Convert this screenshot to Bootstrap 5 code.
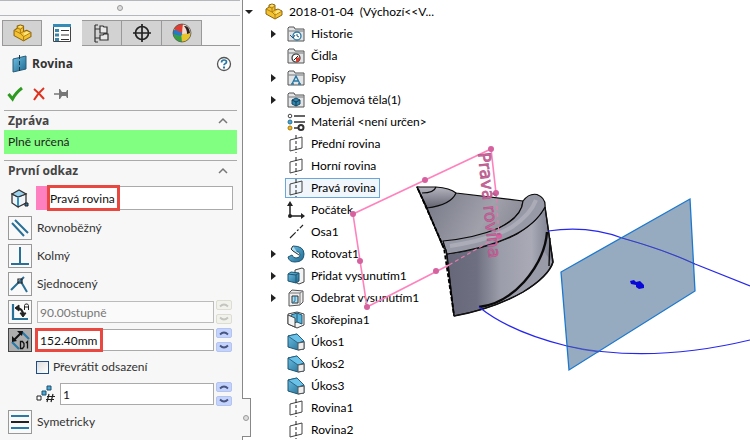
<!DOCTYPE html>
<html lang="cs">
<head>
<meta charset="utf-8">
<meta name="viewport" content="width=device-width, initial-scale=1">
<title>Rovina</title>
<link rel="stylesheet" href="https://cdn.jsdelivr.net/npm/bootstrap@5.3.0/dist/css/bootstrap.min.css">
<style>
body{font:12px/16px Lato,"Open Sans",sans-serif;color:#000;background:#fff;overflow:hidden}
.app{min-height:100vh}
.panel{width:243px;background:#f7f7f7;border-right:1px solid #888;color:#333}
.grip{height:16px;border:solid #b4b8bc;border-width:1px 0;margin-right:2px}
.knob{width:6px;height:6px;border:1px solid #999;border-radius:50%;background:#ddd}
.tabs{margin:4px 2px 0 0;padding-left:2px;height:26px}
.tabs button{width:40px;padding:0;background:#d2d2d2;border:1px solid #999;border-left-width:0;display:grid;place-items:center}
.tabs button:first-child{border-left-width:1px}
.tabs button.on{background:#f7f7f7;border-color:#f7f7f7}
.tabs .rest{border-bottom:1px solid #999}
.heading{height:36px;padding:0 8px 0 12px}
.heading h1,.block h2{font:700 12px/16px "Open Sans",sans-serif}
.heading h1{color:#333}
.plain{border:0;padding:0;background:none;display:grid;place-items:center}
.actions{height:28px;padding-left:7px;gap:6px}
.block{margin:0 5px 0 4px;border-top:1px solid #aaa}
.block h2{height:19px;color:#444}
.status{background:#80ff80;height:24px;padding-left:4px;color:#222;margin-bottom:6px}
.fields{padding:6px 4px 6px;gap:4px}
.line{height:24px;gap:5px}
.reference{height:26px;gap:4px;padding-bottom:2px}
.tool{width:24px;height:24px;border:1px solid #999;background:#f9f9f9;padding:0;display:grid;place-items:center;flex:none}
.tool.on{background:#adadad;border-color:#444}
.box{height:22px;width:0;border:1px solid #aaa;background:#fff;padding:0 2px;color:#111;min-width:0;border-radius:0;outline:0}
.box:disabled{background:#fafafa;border-color:#bbb;color:#777}
.swatch{width:11px;background:#ff80c0}
.mark-red{position:absolute;border:3px solid #e8483f;pointer-events:none}
.mark-ref{left:11px;top:-1px;width:73px;height:26px}
.mark-dist{left:-2px;top:-1px;width:68px;height:24px}
.spin{width:16px;flex:none;margin-left:-3px;margin-right:1px}
.spin button{height:10px;padding:0;border:1px solid #b4c4ef;border-radius:2px;background:#c4d3fb;display:grid;place-items:center}
.spin button:disabled{background:#f2f2ec;border-color:#ddddd2}
.tick{appearance:none;width:13px;height:13px;border:1px solid #1c4d85;background:linear-gradient(135deg,#ddd,#fff);margin:0}
.flip{height:22px;padding-left:28px}
.count{padding-left:28px}
.tab-out{position:absolute;left:100%;top:398px;width:9px;height:39px;background:#f7f7f7;border:1px solid #888;border-left:0}
.view{min-width:0;overflow:hidden}
.tree{padding:1px 0 0 2px;margin:0}
.tree ul{padding-left:22px}
.node{height:22px;white-space:nowrap}
.node svg{flex:none}
.arrow{width:16px;height:16px}
.name{padding:0 2px}
.pick{height:20px;margin-left:18px;padding:0 1px;border:1px solid #6aa6d8;background:#f0f6fb}
.scene{position:absolute;left:0;top:0;height:440px;width:507px;pointer-events:none}
.solid-text{font:400 17px "DejaVu Sans",sans-serif}
</style>
</head>
<body>
<svg width="0" height="0" class="position-absolute" aria-hidden="true">
<defs>
<linearGradient id="bl" x2="1" y2="1"><stop stop-color="#6fc0e4"/><stop offset="1" stop-color="#1f6a92"/></linearGradient>
<symbol id="part" viewBox="0 0 18 18"><path d="M1 9V6l3-2 0-2 3-1 3 1v5l3-1 4 2v4l-7 4-9-5z" fill="#f2c230" stroke="#8a6410" stroke-linejoin="round"/><path d="M4 4l3 1 3-2M7 5v4l3 3v4M10 7l-3 2-6-3M10 12l7-4" fill="none" stroke="#a87a18" stroke-width=".9"/><path d="M5 2.500l2-1 2 1-2 1zM10 9l3-2 3 1-5 3z" fill="#ffe680"/></symbol>
<symbol id="folder" viewBox="0 0 18 18"><path d="M1 16V3l1-1h5l1 2h9v12z" fill="#e2e4e6" stroke="#555"/><path d="M1.500 6h15" stroke="#777"/></symbol>
<symbol id="plane" viewBox="0 0 18 18"><path d="M3 5l12-3v11L3 16z" fill="none" stroke="#444"/><path d="M9 0v18" stroke="#222" stroke-dasharray="4 2 3 2"/></symbol>
<symbol id="draft" viewBox="0 0 18 18"><path d="M1 3l9-2 7 7v8l-6 1-10-3z" fill="url(#bl)" stroke="#1d5573"/><path d="M1 3l10 7 6-2-7-7z" fill="#6ac2e8" stroke="#1d5573" stroke-width=".8"/><path d="M11 10l6-1v7l-6 1z" fill="#eee" stroke="#555"/></symbol>
<symbol id="tri" viewBox="0 0 16 16"><path d="M4 4l5 4-5 4z" fill="#222"/></symbol>
<symbol id="chev" viewBox="0 0 12 8"><path d="M2 6l4-4 4 4" fill="none" stroke="#777" stroke-width="1.500"/></symbol>
<symbol id="up" viewBox="0 0 10 6"><path d="M1 4.500q4-4 8 0" fill="none" stroke="currentColor" stroke-width="1.800"/></symbol>
<symbol id="down" viewBox="0 0 10 6"><path d="M1 1.500q4 4 8 0" fill="none" stroke="currentColor" stroke-width="1.800"/></symbol>
</defs>
</svg>
<div class="app d-flex">
<aside class="panel position-relative flex-shrink-0">
  <div class="grip d-flex justify-content-center align-items-center"><span class="knob"></span></div>
  <nav class="tabs d-flex" aria-label="Karty">
    <button aria-label="Strom"><svg width="19" height="19"><use href="#part"/></svg></button>
    <button class="on" aria-label="Vlastnosti"><svg width="20" height="20" viewBox="0 0 20 20"><path d="M1.500 1.500h17v17h-17z" fill="#fff" stroke="#444"/><path d="M1 1h18v3H1z" fill="#348bb5"/><path d="M3 6h4v3H3zM3 10.500h4v3H3zM3 15h4v3H3z" fill="#3c86aa"/><path d="M9 7.500h8M9 12h8M9 16.500h8" stroke="#333"/></svg></button>
    <button aria-label="Konfigurace"><svg width="20" height="20" viewBox="0 0 20 20" fill="#e8e8e8" stroke="#333" stroke-width="1.200"><path d="M3 2v17M3 6h5M3 15h5M3 2h3M3 19h3" fill="none"/><path d="M8 3h3l1 1h3v6H8zM8 12h3l1-1h4v6H8z"/></svg></button>
    <button aria-label="Rozměry"><svg width="20" height="20" viewBox="0 0 20 20" fill="none" stroke="#222" stroke-width="1.700"><circle cx="10" cy="10" r="6.500"/><path d="M10 1v18M1 10h18"/></svg></button>
    <button aria-label="Vzhled"><svg width="20" height="20" viewBox="0 0 20 20"><circle cx="10" cy="10" r="9" fill="#e8c52b"/><path d="M1 10l8 0 1 9A9 9 0 0 1 1 10z" fill="#33a043"/><path d="M1 8l8-6 2 8-2 3-8-2z" fill="#2878c8"/><path d="M2 6a9 9 0 0 1 9-5l-1 9z" fill="#e03c31"/><path d="M11 1a9 9 0 0 1 8 9l-9 1z" fill="#f2d9d5"/><path d="M12 3q5-1 6 7l-3 1q0-5-3-8z" fill="#2a2020"/><circle cx="10" cy="10" r="9" fill="none" stroke="#555" stroke-width=".8"/></svg></button>
    <span class="rest flex-grow-1"></span>
  </nav>
  <header class="heading d-flex align-items-center">
    <svg width="16" height="18" viewBox="0 0 16 18"><path d="M1 4l13-3v13L1 17z" fill="url(#bl)" stroke="#285c78"/><path d="M7.500 0v18" stroke="#183848" stroke-dasharray="4 2"/></svg>
    <h1 class="mb-0 ms-1 flex-grow-1">Rovina</h1>
    <button class="plain" aria-label="Nápověda"><svg width="18" height="16" viewBox="1 0 16 16"><circle cx="8" cy="8" r="6.500" fill="#fff" stroke="#555" stroke-width="1.300"/><path d="M5.500 6.500q0-2.500 2.500-2.500t2.500 2q0 1-1.500 1.800-1 .5-1 1.500" fill="none" stroke="#2878a5" stroke-width="1.700"/><path d="M7 10.500h2v2H7z" fill="#2878a5"/></svg></button>
  </header>
  <div class="actions d-flex align-items-start pt-1">
    <button class="plain" aria-label="OK"><svg width="18" height="16" viewBox="0 0 18 16"><path d="M1.500 8l4 5q3-6 9.500-11" fill="none" stroke="#2d9a20" stroke-width="3"/></svg></button>
    <button class="plain" aria-label="Storno"><svg width="16" height="16" viewBox="0 0 16 16"><path d="M3 3q5 4 10 10M13 2Q7 7 3 14" fill="none" stroke="#e0301e" stroke-width="2"/></svg></button>
    <button class="plain" aria-label="Připnout"><svg width="16" height="16" viewBox="0 0 16 16"><path d="M1 8h6" stroke="#777" stroke-width="1.500"/><path d="M6 3h1l2 3h4l1-2h1v8h-1l-1-2H9l-2 3H6z" fill="#777"/></svg></button>
  </div>
  <section class="block">
    <h2 class="d-flex align-items-center justify-content-between mb-0 ps-1 pe-2">Zpráva <svg width="12" height="8"><use href="#chev"/></svg></h2>
    <div class="status d-flex align-items-center">Plně určená</div>
  </section>
  <section class="block">
    <h2 class="d-flex align-items-center justify-content-between mb-0 ps-1 pe-2">První odkaz <svg width="12" height="8"><use href="#chev"/></svg></h2>
    <div class="fields d-flex flex-column">
      <div class="reference d-flex align-items-center">
        <svg class="flex-shrink-0" width="24" height="24" viewBox="0 0 24 24"><path d="M4 8l6 3v10l-6-4zM10 11l8-3v9l-8 4" fill="#eef4f8" stroke="#333" stroke-width="1.300"/><path d="M4 8l7-4 7 4-8 3z" fill="#9bd3ee" stroke="#333" stroke-width="1.200"/><path d="M10 11v9" stroke="#3193c4" stroke-width="2"/><path d="M17 17h3v3h-3z" fill="#2878a5" stroke="#222"/></svg>
        <div class="position-relative d-flex flex-grow-1 h-100"><span class="swatch"></span><input class="box flex-grow-1 h-100" aria-label="Reference" value="Pravá rovina"><span class="mark-red mark-ref"></span></div>
      </div>
      <div class="line d-flex align-items-center"><button class="tool" id="t1"><svg width="20" height="20" viewBox="0 0 20 20" stroke="#2a6f96" stroke-width="2"><path d="M2 5l12 13M5 2l13 13"/></svg></button><label for="t1">Rovnoběžný</label></div>
      <div class="line d-flex align-items-center"><button class="tool" id="t2"><svg width="20" height="20" viewBox="0 0 20 20" stroke="#2a6f96" stroke-width="2"><path d="M10 1v17M1 18h18"/></svg></button><label for="t2">Kolmý</label></div>
      <div class="line d-flex align-items-center"><button class="tool" id="t3"><svg width="20" height="20" viewBox="0 0 20 20" stroke="#2a6f96" stroke-width="2" fill="none"><path d="M1 16L14 3M10 6l7 12"/><path d="M8 5h4v4H8z" stroke="#222" stroke-width="1.200"/></svg></button><label for="t3">Sjednocený</label></div>
      <div class="line d-flex align-items-center"><button class="tool" aria-label="Úhel"><svg width="20" height="20" viewBox="0 0 20 20" fill="none" stroke="#222"><path d="M3 2v15h15" stroke="#2a6f96" stroke-width="2.200"/><path d="M6 6q7 0 7 7" stroke-width="2"/><path d="M5 6l4-3v6zM13 15l-3-4h6z" fill="#222"/><path d="M14.500 8V3.500l1-1.500h2l1 1.500V8M14.500 5h4"/></svg></button><input class="box flex-grow-1" aria-label="Úhel" value="90.00stupně" disabled>
        <div class="spin d-grid gap-1"><button disabled aria-label="Více"><svg width="10" height="6" color="#c4c4c0"><use href="#up"/></svg></button><button disabled aria-label="Méně"><svg width="10" height="6" color="#c4c4c0"><use href="#down"/></svg></button></div></div>
      <div class="line d-flex align-items-center"><button class="tool on" aria-label="Vzdálenost"><svg width="22" height="22" viewBox="0 0 22 22" fill="none"><path d="M3 13l7 7M13 3l7 7" stroke="#2a7aa8" stroke-width="2.200"/><path d="M5 11l7-7" stroke="#111" stroke-width="2"/><path d="M3 13V7l5 5zM14 2H8l5 5z" fill="#111"/><path d="M11.500 12.500v7h2l1.500-2v-3l-1.500-2zM17 14l1.500-1.500v7" stroke="#111" stroke-width="1.300"/></svg></button><div class="position-relative d-flex flex-grow-1"><input class="box flex-grow-1" aria-label="Vzdálenost" value="152.40mm"><span class="mark-red mark-dist"></span></div>
        <div class="spin d-grid gap-1"><button aria-label="Více"><svg width="10" height="6" color="#475580"><use href="#up"/></svg></button><button aria-label="Méně"><svg width="10" height="6" color="#475580"><use href="#down"/></svg></button></div></div>
      <div class="flip d-flex align-items-center gap-1"><input class="tick" type="checkbox" id="flip"><label for="flip">Převrátit odsazení</label></div>
      <div class="line count d-flex align-items-center"><svg class="flex-shrink-0" width="19" height="18" viewBox="0 0 19 18"><path d="M1 11h4v4H1z" fill="#fff" stroke="#222"/><path d="M6 6h4v4H6zM11 1h4v4h-4z" fill="#4aa8d4" stroke="#1d4f6e"/><path d="M13 9l-2 8M17 9l-2 8M11 11.500h8M10 14.500h8" stroke="#222" stroke-width="1.200"/></svg><input class="box flex-grow-1" aria-label="Počet rovin" value="1">
        <div class="spin d-grid gap-1"><button aria-label="Více"><svg width="10" height="6" color="#475580"><use href="#up"/></svg></button><button aria-label="Méně"><svg width="10" height="6" color="#475580"><use href="#down"/></svg></button></div></div>
      <div class="line d-flex align-items-center"><button class="tool" id="t4"><svg width="20" height="20" viewBox="0 0 20 20" stroke-width="2"><path d="M1 4h18M1 16h18" stroke="#2a7aa8"/><path d="M1 10h18" stroke="#222"/></svg></button><label for="t4">Symetricky</label></div>
    </div>
  </section>
  <div class="tab-out d-flex align-items-center justify-content-center"><span class="knob"></span></div>
</aside>
<main class="view position-relative flex-grow-1">
  <ul class="tree list-unstyled">
    <li>
      <div class="node d-flex align-items-center"><svg class="me-1" width="16" height="16" viewBox="0 0 16 16"><path d="M0 6h8l-4 4z" fill="#222"/></svg><svg width="18" height="18"><use href="#part"/></svg><span class="name ms-1">2018-01-04&nbsp; (Výchozí&lt;&lt;V...</span></div>
      <ul class="list-unstyled">
        <li class="node d-flex align-items-center"><svg class="arrow"><use href="#tri"/></svg><svg class="mx-1" width="18" height="18"><use href="#folder"/><circle cx="10" cy="11" r="4" fill="#fff" stroke="#2878a5" stroke-width="1.300"/><path d="M10 9v2l2 1M3 10l3 3 2-3" fill="none" stroke="#1f5878"/></svg><span class="name">Historie</span></li>
        <li class="node d-flex align-items-center"><span class="arrow"></span><svg class="mx-1" width="18" height="18"><use href="#folder"/><circle cx="9" cy="11" r="4" fill="#fff" stroke="#333" stroke-width="1.200"/><path d="M9 11l4-1-1 4-3 1z" fill="#e33b2c"/><path d="M7 13l4-4" stroke="#222"/></svg><span class="name">Čidla</span></li>
        <li class="node d-flex align-items-center"><svg class="arrow"><use href="#tri"/></svg><svg class="mx-1" width="18" height="18"><use href="#folder"/><path d="M5 15l4-8 4 8M6.500 12h5M4 15h3M11 15h3" fill="none" stroke="#2878a5" stroke-width="1.400"/></svg><span class="name">Popisy</span></li>
        <li class="node d-flex align-items-center"><svg class="arrow"><use href="#tri"/></svg><svg class="mx-1" width="18" height="18"><use href="#folder"/><path d="M5 9l4-2 4 2v4l-4 2-4-2z" fill="#2f86b0" stroke="#174a66"/><path d="M5 9l4 2 4-2M9 11v4" fill="none" stroke="#123b52"/></svg><span class="name">Objemová těla(1)</span></li>
        <li class="node d-flex align-items-center"><span class="arrow"></span><svg class="mx-1" width="18" height="18"><path d="M7 3h11M7 9h11M7 15h6" stroke="#333" stroke-width="1.500"/><circle cx="3" cy="3" r="1.800" fill="#fff" stroke="#444"/><circle cx="3" cy="9" r="2" fill="#4aa8d4" stroke="#2a6f96"/><circle cx="3" cy="15" r="2" fill="#f0b91c" stroke="#a87a18"/><circle cx="14" cy="14.500" r="2.500" fill="#fff" stroke="#333" stroke-width="2"/></svg><span class="name">Materiál &lt;není určen&gt;</span></li>
        <li class="node d-flex align-items-center"><span class="arrow"></span><svg class="mx-1" width="18" height="18"><use href="#plane"/></svg><span class="name">Přední rovina</span></li>
        <li class="node d-flex align-items-center"><span class="arrow"></span><svg class="mx-1" width="18" height="18"><use href="#plane"/></svg><span class="name">Horní rovina</span></li>
        <li class="node d-flex align-items-center"><span class="pick d-flex align-items-center"><svg width="18" height="18"><use href="#plane"/></svg><span class="name ms-1">Pravá rovina</span></span></li>
        <li class="node d-flex align-items-center"><span class="arrow"></span><svg class="mx-1" width="18" height="18"><path d="M3 3v12h12" fill="none" stroke="#222" stroke-width="1.500"/><path d="M3 0l3 5H0zM18 15l-4 3v-6z" fill="#222"/><circle cx="3" cy="15" r="2" fill="#222"/></svg><span class="name">Počátek</span></li>
        <li class="node d-flex align-items-center"><span class="arrow"></span><svg class="mx-1" width="18" height="18"><path d="M3 15L16 2" stroke="#222" stroke-width="1.200" stroke-dasharray="8 2 2 2"/></svg><span class="name">Osa1</span></li>
        <li class="node d-flex align-items-center"><svg class="arrow"><use href="#tri"/></svg><svg class="mx-1" width="18" height="18"><path d="M6 1q11 0 11 8t-9 8q-6 0-7-5l4-2q1 3 4 3 4 0 4-3 0-4-7-4z" fill="url(#bl)" stroke="#1d5573"/><path d="M6 1L4 4l2 2 6 4" fill="#a8dff5" stroke="#333"/></svg><span class="name">Rotovat1</span></li>
        <li class="node d-flex align-items-center"><svg class="arrow"><use href="#tri"/></svg><svg class="mx-1" width="18" height="18"><path d="M8 3l7-2 2 1v13l-5 2-4-2z" fill="#f3f3f3" stroke="#444"/><path d="M1 7l3-2 8 1v8l-3 2-8-2z" fill="url(#bl)" stroke="#1d5573"/><path d="M1 7l8 1 3-2M9 8v8" fill="none" stroke="#1d5573"/></svg><span class="name">Přidat vysunutím1</span></li>
        <li class="node d-flex align-items-center"><svg class="arrow"><use href="#tri"/></svg><svg class="mx-1" width="18" height="18"><path d="M2 4l3-3 11 1v11l-3 3-11 1z" fill="#eee" stroke="#555"/><path d="M2 4h11v12M13 4l3-2" fill="none" stroke="#777"/><path d="M5 7h6v7H5z" fill="#a8dff5" stroke="#333"/><path d="M8 7v5l-3 2" fill="none" stroke="#2878a5"/></svg><span class="name">Odebrat vysunutím1</span></li>
        <li class="node d-flex align-items-center"><span class="arrow"></span><svg class="mx-1" width="18" height="18"><path d="M1 3l9-2 7 2v11l-7 3-9-4z" fill="#f4f4f4" stroke="#444"/><path d="M4 4l6-2 5 2v9l-5-2-6 2z" fill="#55b3dc" stroke="#1d5573"/><path d="M10 2v9" stroke="#1d5573"/><path d="M1 4l7 3v9l-7-3z" fill="#f4f4f4" stroke="#444"/></svg><span class="name">Skořepina1</span></li>
        <li class="node d-flex align-items-center"><span class="arrow"></span><svg class="mx-1" width="18" height="18"><use href="#draft"/></svg><span class="name">Úkos1</span></li>
        <li class="node d-flex align-items-center"><span class="arrow"></span><svg class="mx-1" width="18" height="18"><use href="#draft"/></svg><span class="name">Úkos2</span></li>
        <li class="node d-flex align-items-center"><span class="arrow"></span><svg class="mx-1" width="18" height="18"><use href="#draft"/></svg><span class="name">Úkos3</span></li>
        <li class="node d-flex align-items-center"><span class="arrow"></span><svg class="mx-1" width="18" height="18"><use href="#plane"/></svg><span class="name">Rovina1</span></li>
        <li class="node d-flex align-items-center"><span class="arrow"></span><svg class="mx-1" width="18" height="18"><use href="#plane"/></svg><span class="name">Rovina2</span></li>
      </ul>
    </li>
  </ul>
  <svg class="scene" viewBox="243 0 507 440" fill="none">
    <defs>
      <linearGradient id="out" gradientUnits="userSpaceOnUse" x1="447" y1="0" x2="553" y2="0"><stop stop-color="#666778"/><stop offset=".28" stop-color="#6e6f80"/><stop offset=".5" stop-color="#9c9daa"/><stop offset=".8" stop-color="#a9aab6"/><stop offset="1" stop-color="#77788a"/></linearGradient>
      <linearGradient id="inn" gradientUnits="userSpaceOnUse" x1="430" y1="190" x2="520" y2="240"><stop stop-color="#777987"/><stop offset=".6" stop-color="#a0a1ab"/><stop offset="1" stop-color="#83848f"/></linearGradient>
      <linearGradient id="dome" x2="0" y2="1"><stop stop-color="#b4b5bf"/><stop offset="1" stop-color="#62636f"/></linearGradient>
    </defs>
    <g stroke="#0a0a0a" stroke-width="1.200" stroke-linejoin="round">
      <path d="M417 187L426 207 442 244Q475 240 497 229 522 217 523 201L456 193Z" fill="url(#inn)"/>
      <path d="M417 187L436 187Q450 188 456 193 451 205 427 208Z" fill="url(#dome)"/>
      <path d="M422 193Q434 193 436 187"/>
      <path d="M447 254Q488 249 517 234 538 221 545 207L553 262Q549 276 523 292 493 309 454 316Z" fill="url(#out)"/>
      <path d="M443 241Q475 238 499 228 522 217 523 201 529 193 537 194.500 546 198 545 207 536 224 514 235 488 248 447 254Z" fill="#9899a6"/>
    </g>
    <path d="M450 246Q490 240 512 227 531 214 536 200" stroke="#b8b9c4" stroke-width="4" opacity=".6"/>
    <path d="M480 308Q520 298 543 250L552 262Q546 278 520 293 500 303 480 308Z" fill="#9a9ba8"/>
    <path d="M479 307Q504 304 524 282 545 258 547 232" stroke="#0a0a0a" stroke-width="2.400"/>
    <path d="M454 316Q493 309 523 292 549 276 553 262L545 207M550 238l-1 28M417 187L427 208 443 247 446 250 454 316" stroke="#111" stroke-width="1.400"/>
    <path d="M418 189L444 248 454 315" stroke="#000" stroke-width="1.800" stroke-dasharray="4 2"/>
    <path d="M548 231Q588 225 622 238 665 250 695 264L750 286M479 307Q510 332 567 346 650 364 750 340" stroke="#2626ee" stroke-width="1.200"/>
    <path d="M690 199L695 291 569 370 561 272Z" fill="#5f7f9e" fill-opacity=".66" stroke="#1c78cf" stroke-width="1.300"/>
    <path d="M567 346Q582 350 599 352M622 238Q665 250 695 264" stroke="#2626d0" stroke-width="1" opacity=".6"/>
    <path d="M630 281l4-1 2 2 4-1 4 4v3l-5 1-3-2v-2l-5-1z" fill="#0808d8"/>
    <path d="M449 265L367 307 353 214 491 149 496 193" stroke="#ff82bd" stroke-width="1.600"/>
    <path d="M449 265L499 236 496 193" stroke="#e87cae" stroke-width="1.200" stroke-dasharray="4 3"/>
    <g fill="#d6619f"><circle cx="491" cy="149" r="3"/><circle cx="425" cy="180" r="3"/><circle cx="353" cy="214" r="3"/><circle cx="360" cy="261" r="3"/><circle cx="367" cy="307" r="3"/><circle cx="436" cy="271" r="3"/><circle cx="496" cy="193" r="3"/><circle cx="499" cy="236" r="3"/></g>
    <text class="solid-text" transform="translate(478 153) rotate(84)" fill="#d667a0" stroke="#b0588a" stroke-width=".7">Pravá rovina</text>
  </svg>
</main>
</div>
<script src="https://cdn.jsdelivr.net/npm/bootstrap@5.3.0/dist/js/bootstrap.bundle.min.js"></script>
</body>
</html>
